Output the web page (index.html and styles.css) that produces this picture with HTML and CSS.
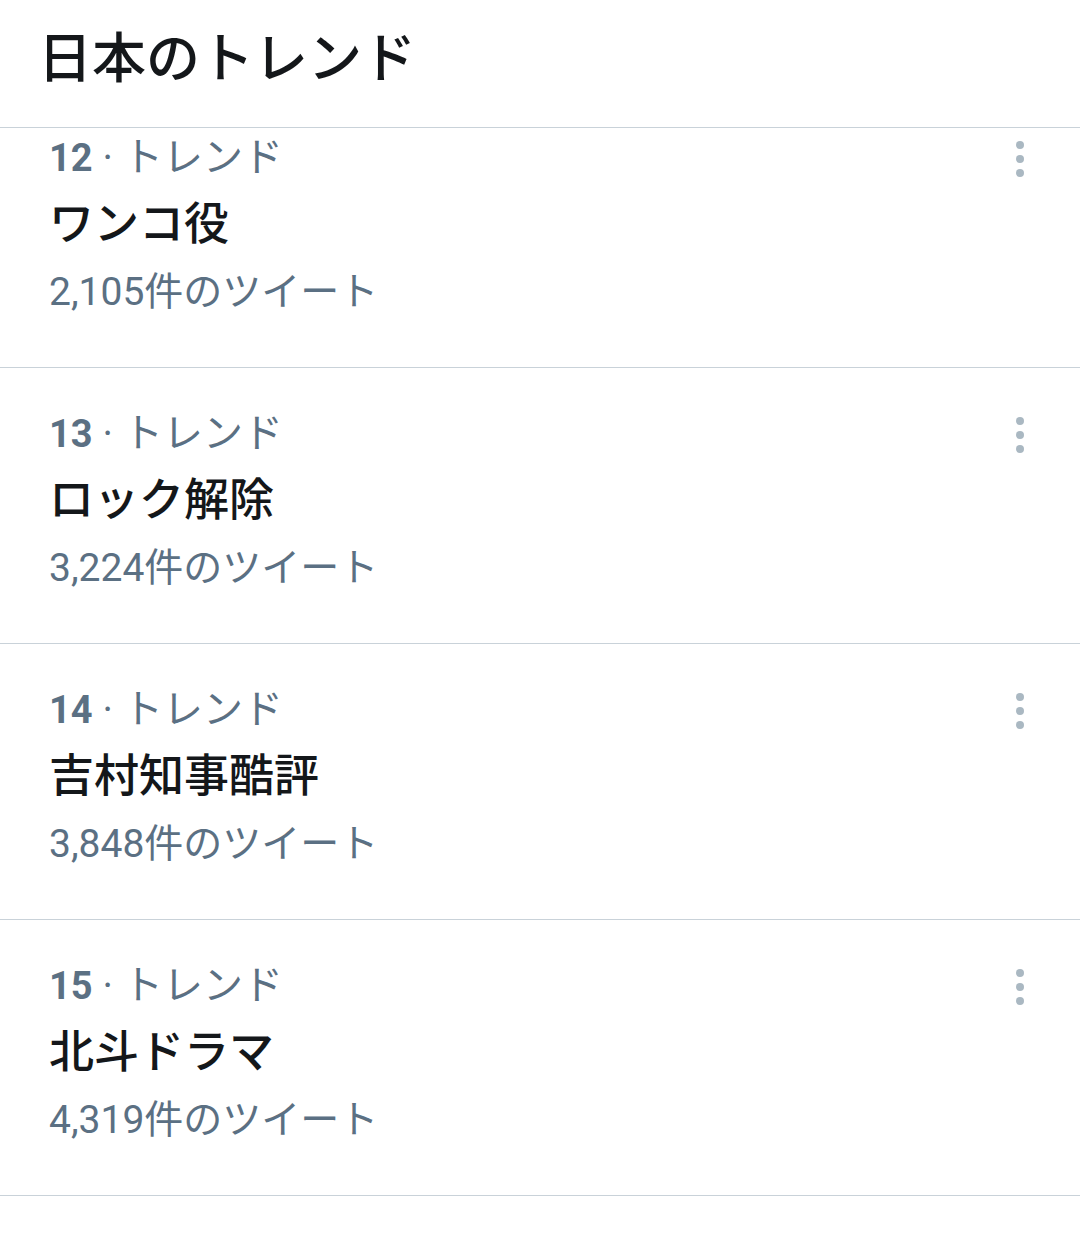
FILE: index.html
```html
<!DOCTYPE html>
<html lang="ja">
<head>
<meta charset="utf-8">
<link rel="stylesheet" href="styles.css">
</head>
<body>
<div class="screen">
  <header class="header">
    <h1 class="header-title">日本のトレンド</h1>
  </header>
  <div class="list">
    <div class="trend trend-first">
      <div class="trend-body">
        <div class="trend-meta"><span class="rank">12</span> · トレンド</div>
        <div class="trend-title">ワンコ役</div>
        <div class="trend-count">2,105件のツイート</div>
      </div>
      <svg class="more" width="8" height="36" viewBox="0 0 8 36"><circle cx="4" cy="4" r="4"/><circle cx="4" cy="18" r="4"/><circle cx="4" cy="32" r="4"/></svg>
    </div>
    <div class="trend">
      <div class="trend-body">
        <div class="trend-meta"><span class="rank">13</span> · トレンド</div>
        <div class="trend-title">ロック解除</div>
        <div class="trend-count">3,224件のツイート</div>
      </div>
      <svg class="more" width="8" height="36" viewBox="0 0 8 36"><circle cx="4" cy="4" r="4"/><circle cx="4" cy="18" r="4"/><circle cx="4" cy="32" r="4"/></svg>
    </div>
    <div class="trend">
      <div class="trend-body">
        <div class="trend-meta"><span class="rank">14</span> · トレンド</div>
        <div class="trend-title">吉村知事酷評</div>
        <div class="trend-count">3,848件のツイート</div>
      </div>
      <svg class="more" width="8" height="36" viewBox="0 0 8 36"><circle cx="4" cy="4" r="4"/><circle cx="4" cy="18" r="4"/><circle cx="4" cy="32" r="4"/></svg>
    </div>
    <div class="trend">
      <div class="trend-body">
        <div class="trend-meta"><span class="rank">15</span> · トレンド</div>
        <div class="trend-title">北斗ドラマ</div>
        <div class="trend-count">4,319件のツイート</div>
      </div>
      <svg class="more" width="8" height="36" viewBox="0 0 8 36"><circle cx="4" cy="4" r="4"/><circle cx="4" cy="18" r="4"/><circle cx="4" cy="32" r="4"/></svg>
    </div>
  </div>
</div>
</body>
</html>
```
FILE: styles.css
```css
html, body {
  margin: 0;
  padding: 0;
  background: #ffffff;
}
.screen {
  width: 1080px;
  height: 1235px;
  overflow: hidden;
  font-family: Roboto, "Noto Sans CJK JP", sans-serif;
}
.header {
  height: 127px;
  border-bottom: 1px solid #c9d2d9;
  box-sizing: content-box;
}
.header-title {
  margin: 0;
  padding: 24px 0 0 38px;
  font-size: 54px;
  line-height: 72px;
  font-weight: 500;
  color: #14171a;
}
.list {
  overflow: hidden;
}
.trend {
  display: flex;
  align-items: flex-start;
  height: 275px;
  border-bottom: 1px solid #c9d2d9;
  padding: 0 56px 0 49px;
  box-sizing: content-box;
}
.trend-first {
  margin-top: -36px;
}
.trend-body {
  flex: 1;
  padding-top: 41px;
}
.trend-meta {
  font-size: 40px;
  line-height: 50px;
  color: #5b7083;
  white-space: nowrap;
}
.rank {
  font-weight: 700;
  font-size: 38px;
}
.trend-title {
  font-size: 45px;
  line-height: 84px;
  font-weight: 500;
  color: #14171a;
}
.trend-count {
  font-size: 39px;
  line-height: 50px;
  color: #5b7083;
}
.more {
  margin-top: 49px;
  fill: #aab8c2;
  flex: none;
}
```
